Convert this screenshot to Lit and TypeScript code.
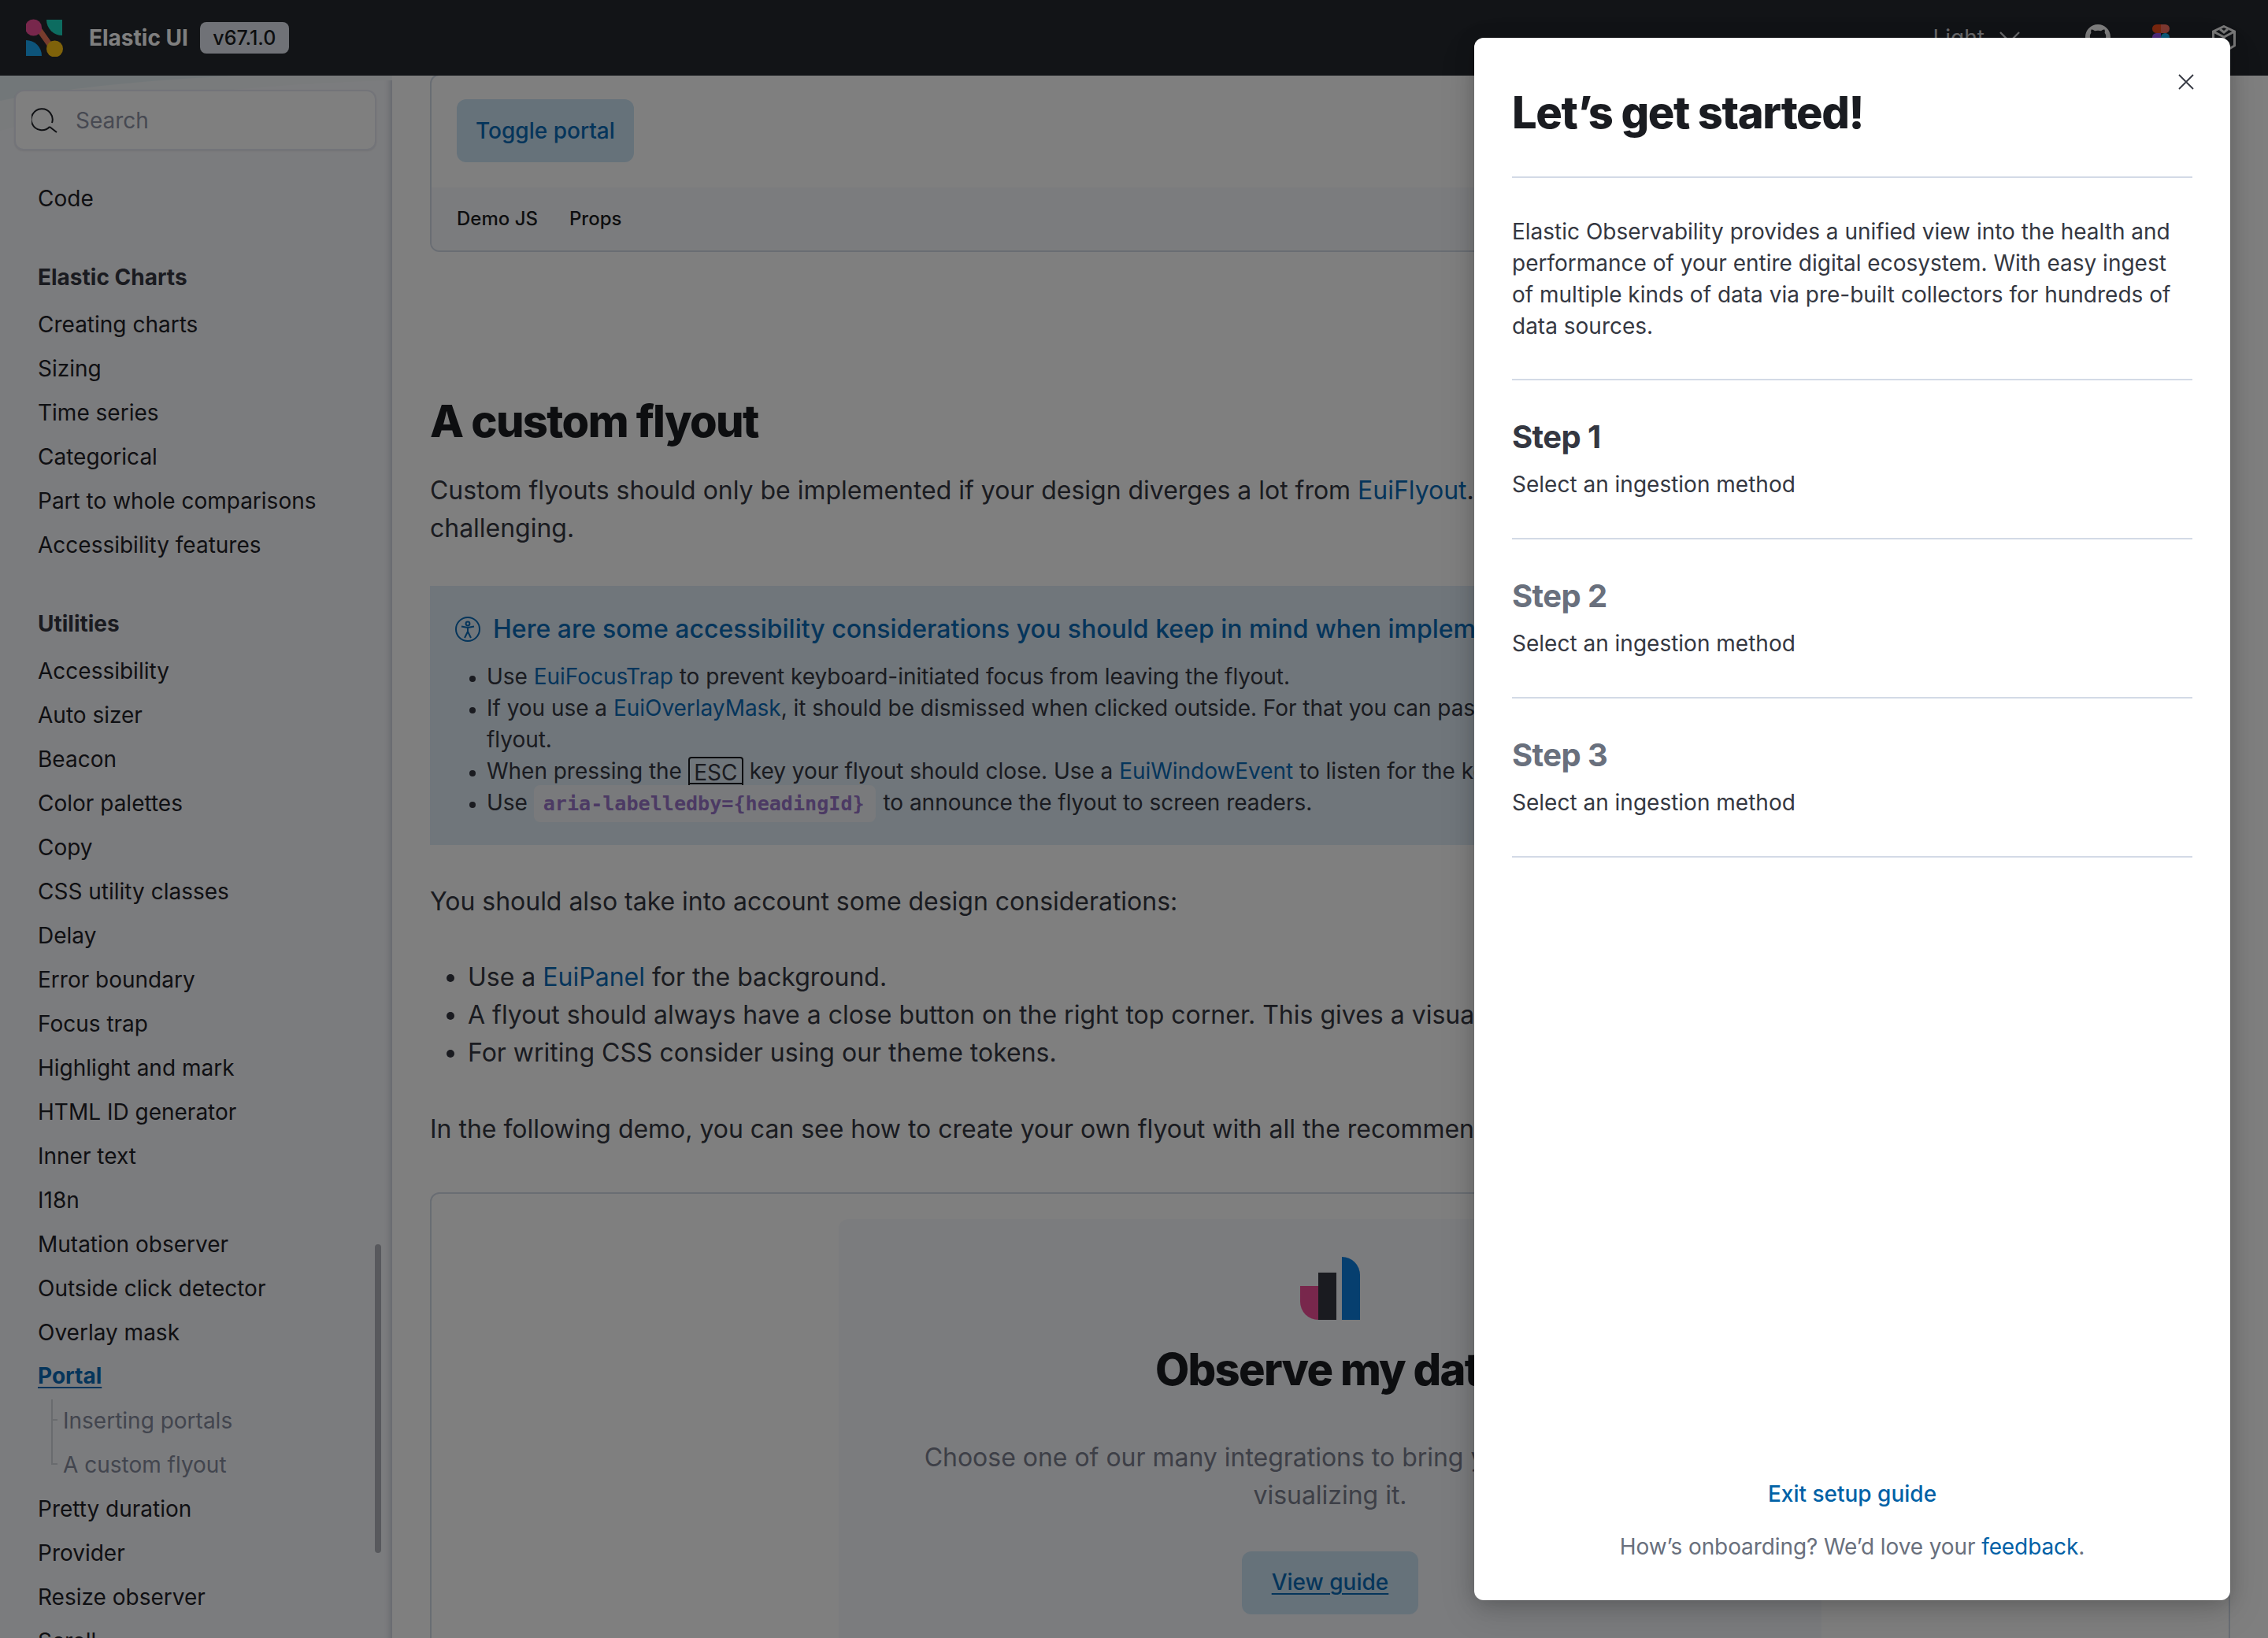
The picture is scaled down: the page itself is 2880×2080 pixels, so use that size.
import { LitElement, html, css } from "lit";
import { customElement } from "lit/decorators.js";

const charts = ["Creating charts", "Sizing", "Time series", "Categorical", "Part to whole comparisons", "Accessibility features"];
const utilsA = ["Accessibility", "Auto sizer", "Beacon", "Color palettes", "Copy", "CSS utility classes", "Delay", "Error boundary", "Focus trap", "Highlight and mark", "HTML ID generator", "Inner text", "I18n", "Mutation observer", "Outside click detector", "Overlay mask"];
const utilsB = ["Pretty duration", "Provider", "Resize observer", "Scroll"];
const githubPath = "M8 0C3.58 0 0 3.58 0 8c0 3.54 2.29 6.53 5.47 7.59.4.07.55-.17.55-.38 0-.19-.01-.82-.01-1.49-2.01.37-2.53-.49-2.69-.94-.09-.23-.48-.94-.82-1.13-.28-.15-.68-.52-.01-.53.63-.01 1.08.58 1.23.82.72 1.21 1.87.87 2.33.66.07-.52.28-.87.51-1.07-1.78-.2-3.64-.89-3.64-3.95 0-.87.31-1.59.82-2.15-.08-.2-.36-1.02.08-2.12 0 0 .67-.21 2.2.82.64-.18 1.32-.27 2-.27.68 0 1.36.09 2 .27 1.53-1.04 2.2-.82 2.2-.82.44 1.1.16 1.92.08 2.12.51.56.82 1.27.82 2.15 0 3.07-1.87 3.75-3.65 3.95.29.25.54.73.54 1.48 0 1.07-.01 1.93-.01 2.2 0 .21.15.46.55.38A8.013 8.013 0 0016 8c0-4.42-3.58-8-8-8z";

@customElement("app-root")
export class AppRoot extends LitElement {
  static styles = css`
    :host { display: block; position: relative; width: 2880px; height: 2080px; overflow: hidden; background: #fff;
      font-family: Inter, "Noto Sans", sans-serif; font-size: 28px; line-height: 40px; color: #343741; }
    * { box-sizing: border-box; }
    a { color: #0a6ab6; text-decoration: none; }
    .header { position: relative; z-index: 2; height: 96px; background: #25282f; display: flex; align-items: center; padding: 0 41px 0 33px; }
    .logo { width: 48px; height: 48px; margin-top: -1px; flex: none; }
    .brand { margin-left: 32px; font-weight: 700; color: #fff; line-height: 40px; }
    .badge { margin-left: 15px; height: 40px; width: 113px; border-radius: 8px; background: #e0e5ee; color: #1a1c21; text-align: center; font-size: 25px; font-weight: 500; line-height: 40px; margin-top: -1px; }
    .right { margin-left: auto; display: flex; align-items: flex-start; height: 96px; }
    .light { margin-top: 28px; color: #d8d8dc; }
    .chev { margin: 40px 0 0 19px; }
    .gh { margin: 31px 0 0 83px; }
    .fig { margin: 31px 0 0 53px; }
    .cube { margin: 32px 0 0 54px; }
    .body { display: flex; height: 1984px; overflow: hidden; }
    .side { position: relative; width: 498px; flex: none; background: #f7f8fc; padding: 18px 18px 0 18px; overflow: hidden;
      box-shadow: inset -10px 0 8px -8px rgba(152, 162, 179, 0.55); }
    .swoosh { position: absolute; left: 0; top: 0; }
    .search { position: relative; height: 77px; width: 460px; border-radius: 12px; background: #feffff; box-shadow: inset 0 0 0 2px rgba(17, 43, 134, 0.1), 0 1px 2px rgba(0,0,0,.08); display: flex; align-items: center; padding-left: 22px; color: #8f93a5; }
    .search svg { flex: none; margin-right: 22px; margin-top: 3px; }
    .nav { position: relative; margin-top: 33px; padding-left: 30px; }
    .item { height: 56px; line-height: 56px; color: #1f2126; white-space: nowrap; }
    .grp { margin-top: 44px; height: 56px; line-height: 56px; font-weight: 700; color: #343741; margin-bottom: 4px; }
    .active { display: block; height: 56px; line-height: 55px; }
    .active span { font-weight: 700; color: #0a6ab6; text-decoration: underline; text-decoration-thickness: 2px; text-underline-offset: 4px; }
    .sub { position: relative; height: 56px; line-height: 56px; padding-left: 33px; margin-left: -1px; color: #858a9c; }
    .sub::before { content: ""; position: absolute; left: 18px; width: 2px; background: #d3d6dc; }
    .sub::after { content: ""; position: absolute; left: 18px; width: 8px; height: 2px; background: #d3d6dc; }
    .s1::before { top: 1px; bottom: 0; }
    .s1::after { top: 26px; }
    .s2::before { top: 0; height: 27px; }
    .s2::after { top: 26px; }
    .thumb { position: absolute; left: 476px; top: 1484px; width: 8px; height: 392px; border-radius: 4px; background: #b0b2ba; }
    .main { flex: 1; min-width: 0; padding: 0 48px; background: #fff; margin-top: -2px; color: #343741; }
    .demo { border: 2px solid #d3dae6; border-radius: 12px; overflow: hidden; height: 226px; }
    .demo-top { height: 142px; padding: 30px 32px; }
    .btn { display: inline-block; height: 80px; line-height: 80px; padding: 0 24px; background: #cce4f5; border-radius: 12px; color: #0a6ab6; font-weight: 500; }
    .demo-foot { height: 82px; background: #f7f8fc; display: flex; align-items: center; gap: 40px; padding: 0 32px 2px; font-size: 24px; font-weight: 500; color: #1a1c21; }
    h2 { margin: 175px 0 24px; font-size: 56px; line-height: 80px; font-weight: 800; letter-spacing: -1.6px; color: #1a1c21; }
    p { margin: 0; font-size: 32px; line-height: 48px; white-space: nowrap; color: #343741; letter-spacing: -0.02px; }
    .callout { margin-top: 49px; height: 329px; background: #e0ecf6; padding: 35px 32px 0; }
    .c-title { display: flex; align-items: center; gap: 16px; height: 40px; font-size: 32px; font-weight: 500; color: #0a6ab6; white-space: nowrap; }
    .c-title svg { flex: none; }
    .callout ul { margin: 20px 0 0; padding: 0 0 0 40px; list-style: disc; }
    .callout li { line-height: 40px; white-space: nowrap; color: #343741; letter-spacing: -0.03px; }
    .callout li::marker { font-size: 24px; }
    kbd { display: inline-block; font: inherit; height: 40px; line-height: 36px; padding: 0 5.5px; margin: -4px 0; border: 2px solid #1a1c21; border-radius: 4px; vertical-align: middle; }
    kbd span { display: block; height: 33px; border-bottom: 2px solid #1a1c21; margin: 0 -5.5px; padding: 0 5.5px; }
    code { font-family: "DejaVu Sans Mono", "Liberation Mono", monospace; font-weight: 700; font-size: 25.1px; letter-spacing: 0; padding: 9px 14px 9px 12px; margin: 0 2px 0 0; background: #f3f4f8; border-radius: 8px; color: #9875c8; }
    .p2 { margin-top: 48px; }
    .list { margin: 48px 0 0; padding: 0 0 0 48px; font-size: 32px; line-height: 48px; white-space: nowrap; color: #343741; }
    .p3 { margin-top: 49px; }
    .card { margin-top: 56px; border: 2px solid #d3dae6; border-radius: 12px; padding: 32px 0 0; height: 700px; }
    .inner { width: 1248px; margin: 0 auto; height: 660px; background: #f7f8fc; border-radius: 12px; padding-top: 48px; display: flex; flex-direction: column; align-items: center; text-align: center; }
    .inner svg { display: block; flex: none; }
    .inner h3 { margin: 23px 0 48px; font-size: 56px; line-height: 80px; font-weight: 800; letter-spacing: -1.7px; color: #1a1c21; white-space: nowrap; }
    .inner p { color: #7b7f8e; }
    .guide { margin-top: 47px; width: 224px; height: 80px; line-height: 78px; border-radius: 12px; background: #cce4f5; color: #0a6ab6; font-weight: 500; text-decoration: underline; text-decoration-thickness: 2px; text-underline-offset: 4px; flex: none; }
    .mask { position: absolute; inset: 0; z-index: 5; background: rgba(0, 0, 0, 0.5); }
    .flyout { position: absolute; z-index: 6; left: 1872px; top: 48px; width: 960px; height: 1984px; background: #fff; border-radius: 12px; padding: 0 48px 48px;
      box-shadow: 0 4px 24px rgba(0,0,0,.18), 0 16px 48px rgba(0,0,0,.12); display: flex; flex-direction: column; }
    .close { position: absolute; left: 894px; top: 46px; display: block; }
    h1 { margin: 55px 0 0; padding-bottom: 41px; border-bottom: 2px solid #d3dae6; font-size: 56px; line-height: 80px; font-weight: 800; letter-spacing: -1.4px; color: #1a1c21; }
    .desc { padding: 48px 0 47px; border-bottom: 2px solid #d3dae6; color: #343741; }
    .step { padding: 48px 0 48px; border-bottom: 2px solid #d3dae6; }
    .step h4 { margin: 0 0 16px; font-size: 40px; line-height: 48px; font-weight: 700; letter-spacing: -0.6px; color: #343741; }
    .step.off h4 { color: #69707d; }
    .foot { margin-top: auto; text-align: center; }
    .exit { display: block; color: #0061a6; font-weight: 500; margin-bottom: 27px; }
    .fb { color: #69707d; letter-spacing: -0.1px; }
    .fb a { color: #0061a6; }
  `;

  private logo() {
    return html`<svg class="logo" width="48" height="48" viewBox="0 0 48 48">
      <path d="M9 9 L15 5 L39 39 L33 43Z" fill="#f0795b"/>
      <circle cx="9.5" cy="11" r="10.5" fill="#f04e98"/>
      <circle cx="36.5" cy="38" r="10.5" fill="#fec514"/>
      <path d="M26 1H46V21A20 20 0 0 1 26 1Z" fill="#1bd9c0"/>
      <path d="M0 27A20 20 0 0 1 20 47H0Z" fill="#1ba9f5"/>
    </svg>`;
  }

  render() {
    return html`
      <div class="header">
        ${this.logo()}
        <div class="brand">Elastic UI</div>
        <div class="badge">v67.1.0</div>
        <div class="right">
          <div class="light">Light</div>
          <svg class="chev" width="26" height="16" viewBox="0 0 26 16"><path d="M1 1L13 13L25 1" fill="none" stroke="#d8d8dc" stroke-width="2.4"/></svg>
          <svg class="gh" width="32" height="32" viewBox="0 0 16 16"><path d="${githubPath}" fill="#fff"/></svg>
          <svg class="fig" width="22" height="33" viewBox="0 0 22 33">
            <path d="M11 0H5.5a5.5 5.5 0 0 0 0 11H11Z" fill="#f24e1e"/>
            <path d="M11 0h5.5a5.5 5.5 0 0 1 0 11H11Z" fill="#ff7262"/>
            <path d="M11 11H5.5a5.5 5.5 0 0 0 0 11H11Z" fill="#a259ff"/>
            <circle cx="16.5" cy="16.5" r="5.5" fill="#1abcfe"/>
            <path d="M11 22H5.5a5.5 5.5 0 1 0 5.5 5.5Z" fill="#0acf83"/>
          </svg>
          <svg class="cube" width="30" height="36" viewBox="0 0 30 36" fill="none" stroke="#f2f2f2" stroke-width="3">
            <path d="M15 1.5L28.5 8V26L15 34L1.5 26V8Z"/><path d="M1.5 8L15 15L28.5 8M15 15V34M10 5L15 9L20 5"/>
          </svg>
        </div>
      </div>
      <div class="body">
        <aside class="side">
          <svg class="swoosh" width="498" height="100" viewBox="0 0 498 100">
            <path d="M0 0H498V6Q200 14 0 70Z" fill="#f2f6f8"/>
            <path d="M0 0H300Q110 10 0 32Z" fill="#e4eff3"/>
          </svg>
          <div class="search">
            <svg width="34" height="34" viewBox="0 0 34 34" fill="none" stroke="#202228" stroke-width="2">
              <path d="M23 24A13.5 13.5 0 1 1 26 19"/><path d="M23 24L32 31"/>
            </svg>Search
          </div>
          <div class="nav">
            <div class="item">Code</div>
            <div class="grp">Elastic Charts</div>
            ${charts.map((t) => html`<div class="item">${t}</div>`)}
            <div class="grp">Utilities</div>
            ${utilsA.map((t) => html`<div class="item">${t}</div>`)}
            <a class="active"><span>Portal</span></a>
            <div class="sub s1">Inserting portals</div>
            <div class="sub s2">A custom flyout</div>
            ${utilsB.map((t) => html`<div class="item">${t}</div>`)}
          </div>
          <div class="thumb"></div>
        </aside>
        <main class="main">
          <div class="demo">
            <div class="demo-top"><span class="btn">Toggle portal</span></div>
            <div class="demo-foot"><span>Demo JS</span><span>Props</span></div>
          </div>
          <h2>A custom flyout</h2>
          <p>Custom flyouts should only be implemented if your design diverges a lot from <a>EuiFlyout</a>. Ensuring that they remain accessible can be<br>challenging.</p>
          <div class="callout">
            <div class="c-title">
              <svg width="32" height="32" viewBox="0 0 32 32" fill="none" stroke="#0a6ab6" stroke-width="2">
                <circle cx="16" cy="16" r="15"/><circle cx="16" cy="9" r="2.4"/><path d="M8 12.5L16 14L24 12.5M16 14V19M16 19L12 27M16 19L20 27"/>
              </svg>
              <span>Here are some accessibility considerations you should keep in mind when implementing a custom flyout</span>
            </div>
            <ul>
              <li>Use <a>EuiFocusTrap</a> to prevent keyboard-initiated focus from leaving the flyout.</li>
              <li>If you use a <a>EuiOverlayMask</a>, it should be dismissed when clicked outside. For that you can pass the close handler to the<br>flyout.</li>
              <li>When pressing the <kbd><span>ESC</span></kbd> key your flyout should close. Use a <a>EuiWindowEvent</a> to listen for the key press.</li>
              <li>Use <code>aria-labelledby={headingId}</code> to announce the flyout to screen readers.</li>
            </ul>
          </div>
          <p class="p2">You should also take into account some design considerations:</p>
          <ul class="list">
            <li>Use a <a>EuiPanel</a> for the background.</li>
            <li>A flyout should always have a close button on the right top corner. This gives a visual cue to users.</li>
            <li>For writing CSS consider using our theme tokens.</li>
          </ul>
          <p class="p3">In the following demo, you can see how to create your own flyout with all the recommendations.</p>
          <div class="card">
            <div class="inner">
              <svg width="76" height="80" viewBox="0 0 76 80">
                <path d="M0 37H23V80A23 23 0 0 1 0 57Z" fill="#f04e98"/>
                <rect x="23" y="20" width="23" height="60" fill="#343741"/>
                <path d="M53 0A23 23 0 0 1 76 23V80H53Z" fill="#0c7ede"/>
              </svg>
              <h3>Observe my data</h3>
              <p>Choose one of our many integrations to bring your data in and begin<br>visualizing it.</p>
              <div class="guide">View guide</div>
            </div>
          </div>
        </main>
      </div>
      <div class="mask"></div>
      <section class="flyout">
        <svg class="close" width="20" height="20" viewBox="0 0 20 20"><path d="M1 1L19 19M19 1L1 19" stroke="#343741" stroke-width="1.8" fill="none"/></svg>
        <h1>Let’s get started!</h1>
        <div class="desc">Elastic Observability provides a unified view into the health and performance of your entire digital ecosystem. With easy ingest of multiple kinds of data via pre-built collectors for hundreds of data sources.</div>
        <div class="step"><h4>Step 1</h4><div>Select an ingestion method</div></div>
        <div class="step off"><h4>Step 2</h4><div>Select an ingestion method</div></div>
        <div class="step off"><h4>Step 3</h4><div>Select an ingestion method</div></div>
        <div class="foot">
          <a class="exit">Exit setup guide</a>
          <div class="fb">How’s onboarding? We’d love your <a>feedback</a>.</div>
        </div>
      </section>
    `;
  }
}
